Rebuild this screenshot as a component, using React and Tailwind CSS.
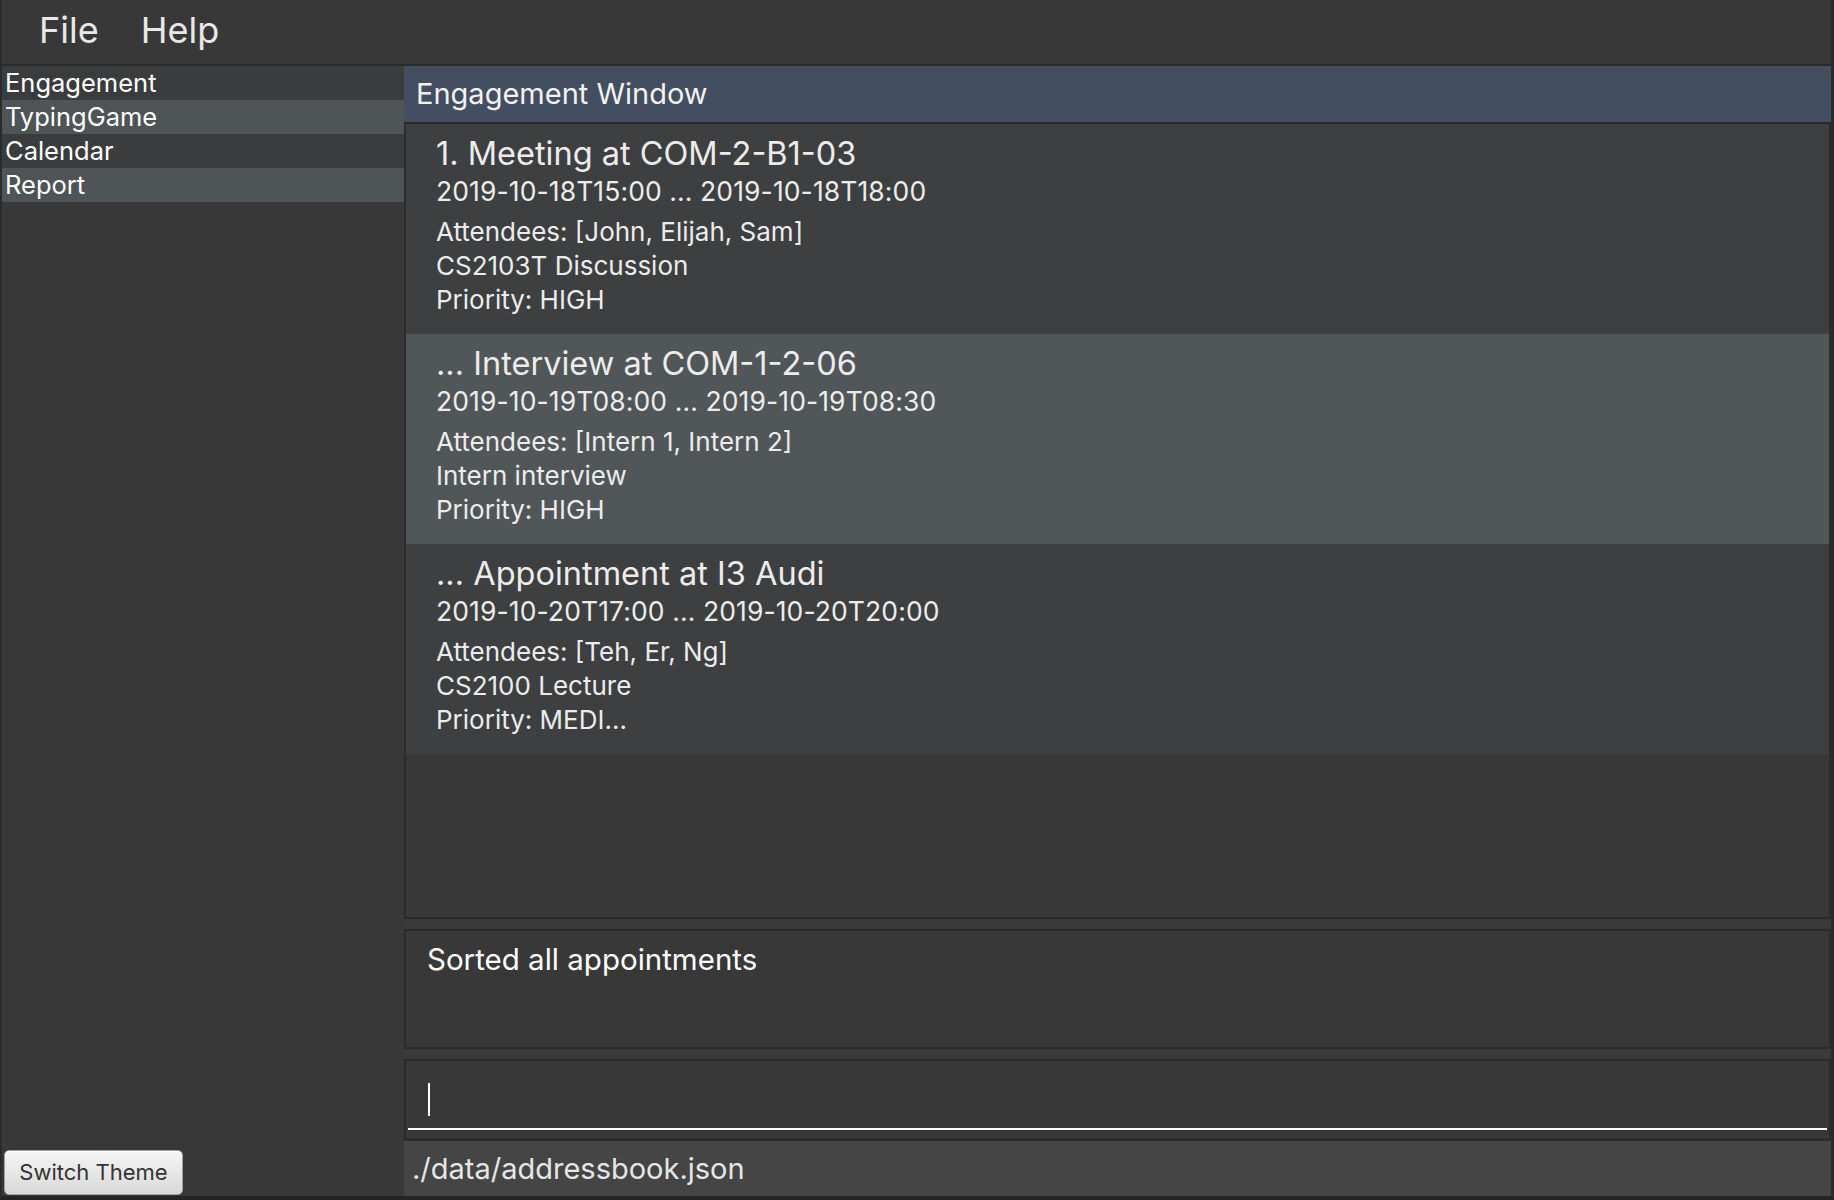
import React from "react";

const cards = [
  {
    title: "1. Meeting at COM-2-B1-03",
    time: "2019-10-18T15:00 ... 2019-10-18T18:00",
    attendees: "Attendees: [John, Elijah, Sam]",
    desc: "CS2103T Discussion",
    priority: "Priority: HIGH",
  },
  {
    title: "... Interview at COM-1-2-06",
    time: "2019-10-19T08:00 ... 2019-10-19T08:30",
    attendees: "Attendees: [Intern 1, Intern 2]",
    desc: "Intern interview",
    priority: "Priority: HIGH",
  },
  {
    title: "... Appointment at I3 Audi",
    time: "2019-10-20T17:00 ... 2019-10-20T20:00",
    attendees: "Attendees: [Teh, Er, Ng]",
    desc: "CS2100 Lecture",
    priority: "Priority: MEDI...",
  },
];

const tabs = ["Engagement", "TypingGame", "Calendar", "Report"];

function Card({ c, odd }) {
  return (
    <div
      className={
        "h-[210px] pl-[30px] pt-[10px] text-[#ececec] " +
        (odd ? "bg-[#515658]" : "bg-[#3d3f41]")
      }
    >
      <div className="text-[32.5px] leading-[40px] whitespace-nowrap">{c.title}</div>
      <div className="text-[26.5px] leading-[34px] whitespace-nowrap tracking-[0.1px]">{c.time}</div>
      <div className="mt-[7px] text-[26px] leading-[34px] whitespace-nowrap">{c.attendees}</div>
      <div className="text-[26px] leading-[34px] whitespace-nowrap">{c.desc}</div>
      <div className="text-[26px] leading-[34px] whitespace-nowrap">{c.priority}</div>
    </div>
  );
}

export default function App() {
  return (
    <div
      className="w-[1834px] h-[1200px] bg-[#383838] flex flex-col border-l-2 border-r-[3px] border-b-4 border-l-[#2b2b2b] border-r-[#2b2b2b] border-b-[#242424] overflow-hidden"
      style={{ fontFamily: "Inter, 'Noto Sans', 'Liberation Sans', sans-serif" }}
    >
      {/* Menu bar */}
      <div className="h-[66px] shrink-0 flex items-center border-b-2 border-[#2b2b2b] pl-[37px] gap-[42px] text-[36px] text-[#e8e8e8] pb-[4px]">
        <span>File</span>
        <span>Help</span>
      </div>

      <div className="flex flex-1 min-h-0">
        {/* Sidebar */}
        <div className="w-[402px] shrink-0 flex flex-col justify-between">
          <div className="flex flex-col pt-0">
            {tabs.map((t, i) => (
              <div
                key={t}
                className={
                  "h-[34px] pl-[3px] flex items-center text-[25.5px] text-white " +
                  (i % 2 === 1 ? "bg-[#4f5456]" : "bg-[#3b3c3d]")
                }
              >
                {t}
              </div>
            ))}
          </div>
          <div className="pl-[2px] pb-[1px]">
            <button className="w-[179px] h-[45px] rounded-[5px] border border-[#a0a0a0] bg-gradient-to-b from-[#f5f5f5] to-[#d9d9d9] text-[#333] text-[22px] shadow-[inset_0_1px_0_#ffffff]">
              Switch Theme
            </button>
          </div>
        </div>

        {/* Main */}
        <div className="flex-1 flex flex-col min-w-0">
          <div className="h-[56px] shrink-0 bg-[#434e60] flex items-center pl-[12px] text-[29px] text-[#f2f2f2]">
            Engagement Window
          </div>
          <div className="h-[797px] shrink-0 border-2 border-[#2b2b2b] bg-[#383838] flex flex-col">
            {cards.map((c, i) => (
              <Card key={i} c={c} odd={i % 2 === 1} />
            ))}
          </div>
          <div className="h-[10px] shrink-0 bg-[#3a3a3a]" />
          <div className="h-[120px] shrink-0 border-2 border-[#2b2b2b] bg-[#383838] pl-[21px] pt-[10px]">
            <div className="text-[29.5px] leading-[36px] text-white">Sorted all appointments</div>
          </div>
          <div className="h-[10px] shrink-0 bg-[#3a3a3a]" />
          <div className="h-[81px] shrink-0 border-2 border-[#2b2b2b] bg-[#383838] flex flex-col">
            <div className="flex-1 mx-[2px] border-b-2 border-white relative mb-[8px]">
              <div className="absolute left-[20px] top-[22px] w-[2px] h-[33px] bg-white" />
            </div>
          </div>
          <div className="flex-1 bg-[#454545] border-t border-[#2b2b2b] flex items-center pl-[8px] text-[29px] text-[#e6e6e6]">
            ./data/addressbook.json
          </div>
        </div>
      </div>
    </div>
  );
}
